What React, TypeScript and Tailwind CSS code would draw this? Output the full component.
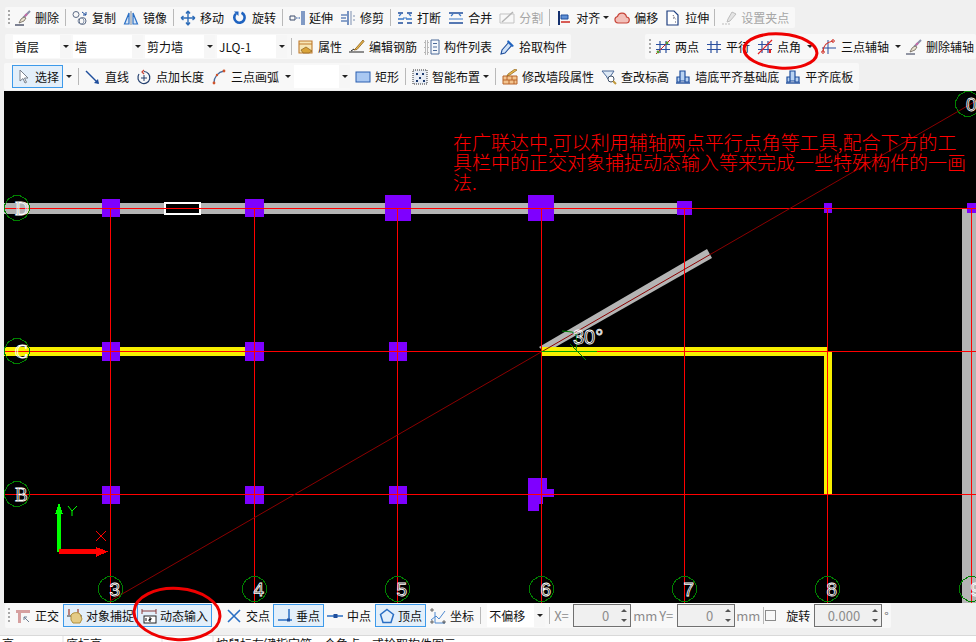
import type { ReactNode } from "react";
import clsx from "clsx";

const navy = "#1f4e9c";
const blue = "#2a6fc4";

function Svg({ children }: { children: ReactNode }) {
  return (
    <svg viewBox="0 0 16 16" className="h-4 w-4 shrink-0" fill="none">
      {children}
    </svg>
  );
}

const axisGrid = (
  <>
    <path d="M5 2v12M11 2v12M1 5.5h14M1 10.5h14" stroke="#2b4f9e" strokeWidth="1.2" />
  </>
);

const dualBars = (
  <>
    <path d="M1 3h5M10 3h5M1 13h5M10 13h5" stroke={navy} strokeWidth="1.3" />
    <path d="M2 6l2-2M14 6l-2-2M6 8h4" stroke="#3a78c8" strokeWidth="1.2" />
    <path d="M1 9h6M9 9h6" stroke="#3a78c8" strokeWidth="1.4" />
  </>
);

const buildingIcon = (
  <>
    <path d="M5 2h5v10H5zM2 8h3v5H2zM10 8h4v5h-4z" fill="#b9d3f2" stroke={navy} strokeWidth="1.2" />
    <path d="M1 14h14" stroke={navy} strokeWidth="1.4" />
  </>
);

const brush = (
  <>
    <path d="M15 1L8 8" stroke="#8a8fa8" strokeWidth="2" />
    <path d="M9 7l-3 2-2 4 5-2 2-3z" fill="#e9e2d0" stroke="#6b6257" strokeWidth=".8" />
    <path d="M12 4l-2 2" stroke="#c96aa8" strokeWidth="2" />
    <path d="M0 15h9" stroke="#2c3550" strokeWidth="1.2" />
  </>
);

const icons: Record<string, ReactNode> = {
  brush,
  copy: (
    <>
      <circle cx="4" cy="4.5" r="3" stroke="#5c6b85" />
      <circle cx="10.5" cy="11" r="3.5" stroke="#5c6b85" />
      <circle cx="9" cy="11" r="3" stroke="#8a97ad" />
      <path d="M10 2l4 3M14 2v3h-3" stroke={navy} />
    </>
  ),
  mirror: (
    <>
      <path d="M6 3L1.5 14H6zM10 3l4.5 11H10z" stroke={blue} strokeWidth="1.2" fill="#d8e6f7" />
      <path d="M8 1v14" stroke="#7d8797" />
    </>
  ),
  move: (
    <path
      d="M8 1v14M1 8h14M8 1L6 3.5M8 1l2 2.5M8 15l-2-2.5M8 15l2-2.5M1 8l2.5-2M1 8l2.5 2M15 8l-2.5-2M15 8l-2.5 2"
      stroke="#2d6cb8"
      strokeWidth="1.4"
    />
  ),
  rotate: (
    <>
      <path d="M4 3.6a5.2 5.2 0 1 0 5.5-.9" stroke="#1f63c0" strokeWidth="2.6" />
      <path d="M2 1.5h4.5V6z" fill="#1f63c0" />
    </>
  ),
  extend: (
    <>
      <path d="M1 6h5v4H1z" stroke="#3a4a6a" />
      <path d="M7 8h4" stroke={navy} strokeDasharray="1.5 1" />
      <path d="M13 1v14M15 1v14" stroke={navy} strokeWidth="1.1" />
    </>
  ),
  trim: (
    <>
      <path d="M1 5h6M1 11h6M1 8h5" stroke={navy} />
      <path d="M8 1v14" stroke={navy} strokeWidth="1.2" />
      <path d="M11 1v14" stroke="#7d8fb0" />
      <path d="M13 6h2M13 10h2" stroke="#7d8fb0" />
    </>
  ),
  dualBars,
  merge: (
    <>
      <path d="M1 3h14M1 13h14" stroke={navy} strokeWidth="1.3" />
      <path d="M3 6l2-2M13 6l-2-2M1 9h14" stroke="#3a78c8" strokeWidth="1.2" />
    </>
  ),
  split: (
    <>
      <path d="M1 4h14M1 13h14M1 4v9M15 4v9" stroke="#c3c3c3" />
      <path d="M3 12L14 2" stroke="#b5b5b5" strokeWidth="1.4" />
    </>
  ),
  align: (
    <>
      <path d="M3 1v14" stroke="#14306e" strokeWidth="2" />
      <path d="M5 5h7v4H5z" fill="#5f90d6" stroke={navy} />
      <path d="M5 12h9" stroke="#d0342c" strokeWidth="1.6" />
    </>
  ),
  offset: (
    <path
      d="M4 13a3.3 3.3 0 0 1-.5-6.5 4.6 4.6 0 0 1 9 .5 3 3 0 0 1-.5 6z"
      fill="#f2c0ba"
      stroke="#c7463a"
      strokeWidth="1.2"
    />
  ),
  stretch: (
    <>
      <path d="M2 1h7l4 4v10H2z" stroke="#1e3f80" strokeWidth="1.2" fill="#fff" />
      <path d="M8 5l3 5M10 12h2M8 8h1" stroke="#556" strokeDasharray="1 1" />
    </>
  ),
  grip: (
    <>
      <path d="M11 2L7 9l-1 3 3-1 6-7z" fill="#e4e4e4" stroke="#bdbdbd" />
      <path d="M1 14h9" stroke="#bdbdbd" strokeDasharray="2 1" />
    </>
  ),
  props: (
    <>
      <path d="M1 2h13v12H1z" fill="#f7e6b5" stroke="#bf7a2e" strokeWidth="1.1" />
      <path d="M1 5h13" stroke="#bf7a2e" />
      <path d="M3 11l5-3 6 4-3 2H5z" fill="#d9a43a" stroke="#8b5f1d" strokeWidth=".7" />
    </>
  ),
  rebar: (
    <>
      <path d="M14 1L7 9l-2 2 3-.5 7-8z" fill="#e8b74b" stroke="#8b5f1d" strokeWidth=".8" />
      <path d="M0 13h15" stroke="#222" />
      <path d="M2 12l3-2" stroke="#222" />
    </>
  ),
  list: (
    <>
      <path d="M7 1h8v14H7z" fill="#f4f7fb" stroke="#4c6a99" />
      <path d="M9 4.5h4M9 8h4M9 11.5h4" stroke="#4c6a99" />
      <path d="M1 2h3v3H1zM1 7h3v3H1zM1 12h3v3H1z" stroke="#7a7a7a" strokeDasharray="1 1" />
    </>
  ),
  pick: (
    <>
      <path d="M10 3L3 11l-1 4 4-1 7-8z" fill="#cfe2f8" stroke={navy} strokeWidth="1.1" />
      <path d="M9 1l6 6-2 1-5-5z" fill="#1f63c0" />
    </>
  ),
  twoPoint: (
    <>
      {axisGrid}
      <path d="M1 15L15 1" stroke="#c92a2a" />
      <circle cx="3" cy="13" r="1.4" fill="#5a9b2a" />
      <circle cx="12" cy="4" r="1.4" fill="#5a9b2a" />
    </>
  ),
  parallel: axisGrid,
  angle: (
    <>
      {axisGrid}
      <path d="M1 15L15 1" stroke="#e02020" strokeWidth="1.2" />
      <path d="M13 10v4" stroke="#e02020" strokeWidth="2" />
    </>
  ),
  arcAxis: (
    <>
      <path d="M7 1v14M1 9h14" stroke="#2b4f9e" />
      <path d="M2 13C2 7 6 3 12 2" stroke="#d0342c" strokeWidth="1.2" />
      <circle cx="2" cy="13" r="1.3" stroke="#d0342c" />
      <circle cx="12" cy="2" r="1.3" stroke="#d0342c" />
    </>
  ),
  pointer: <path d="M4 1v11l3-2.5 2 4.5 1.5-.7-2-4.300h3.500z" fill="#fff" stroke="#78808c" />,
  line: (
    <>
      <path d="M1 2l12 12" stroke={navy} strokeWidth="1.4" />
      <path d="M14 15l-1-5-4 4z" fill={navy} />
    </>
  ),
  addLength: (
    <>
      <path d="M3 5a6 6 0 1 0 5-2.500" stroke="#24406f" strokeWidth="1.2" />
      <path d="M8 6v6M5 9h6" stroke="#24406f" />
      <path d="M8 1l-2 2 2 2" stroke="#c7463a" strokeWidth="1.2" />
    </>
  ),
  arc: (
    <>
      <path d="M3 14C3 8 7 3 13 2" stroke="#4a6a9a" strokeWidth="1.3" />
      <circle cx="3" cy="14" r="1.4" fill="#d0542c" />
      <circle cx="6" cy="6" r="1.2" fill="#d0542c" />
      <circle cx="13" cy="2" r="1.4" fill="#d0542c" />
    </>
  ),
  rect: <rect x="1" y="3" width="14" height="10" fill="#a9c8f2" stroke="#2a5fb0" />,
  smart: (
    <>
      <rect x="1" y="1" width="14" height="14" fill="#e8edf5" stroke="#333" strokeDasharray="1 1" />
      <path d="M4 4h2v2H4zM10 4h2v2h-2zM7 8h2v2H7zM4 11h2v2H4zM11 11h2v2h-2z" fill="#1d3b70" />
    </>
  ),
  wallAttr: (
    <>
      <path d="M1 7h14v8H1z" fill="#f3c48f" stroke="#b8652a" />
      <path d="M1 11h14M5 7v4M10 7v4M7 11v4M12 11v4" stroke="#b8652a" />
      <path d="M13 0L6 5l-1 2 3-1 7-5z" fill="#e8b74b" stroke="#8b5f1d" strokeWidth=".7" />
    </>
  ),
  level: (
    <>
      <path d="M1 2h12l-4 6v3L6 9V8z" fill="#dce8f5" stroke="#4c6a99" />
      <circle cx="10" cy="10" r="3" fill="#fff" stroke="#3f4f66" />
      <path d="M12 12l3 3" stroke="#c29a3c" strokeWidth="2" />
    </>
  ),
  building: buildingIcon,
  ortho: (
    <>
      <path d="M1 2h14v3H6v10H3V5H1z" fill="#d6a0a0" />
      <path d="M9 9l5 5M9 9v3M9 9h3" stroke="#6f7f94" />
    </>
  ),
  snap: (
    <>
      <path d="M2 1v6M11 1v6" stroke="#a23a2a" strokeWidth="1.2" />
      <path d="M0 8h15" stroke="#333" />
      <path d="M4 7c2-3 7-3 9-1l2 5-2 4H6l-2-3z" fill="#e5cb86" stroke="#b08f3c" />
    </>
  ),
  dynamic: (
    <>
      <path d="M1 3h14M1 1v5M15 1v5" stroke="#8a3a3a" />
      <rect x="3" y="8" width="12" height="7" fill="#fff" stroke="#222" />
      <path d="M5 10v3M8 10h2v1.500H8V13h2" stroke="#111" />
    </>
  ),
  cross: <path d="M2 2l12 12M14 2L2 14" stroke={blue} strokeWidth="1.6" />,
  perp: (
    <>
      <path d="M1 12h14M12 1v11" stroke={blue} strokeWidth="1.5" />
      <rect x="10" y="10.500" width="3" height="3" fill={navy} />
    </>
  ),
  mid: (
    <>
      <path d="M0 8h16" stroke={blue} strokeWidth="1.5" />
      <rect x="6.500" y="6" width="4" height="4" fill={navy} />
    </>
  ),
  vertex: <path d="M8 1.500l6.500 5-2.500 8H4l-2.500-8z" stroke={blue} strokeWidth="1.5" />,
  coord: (
    <>
      <path d="M5 15V4M5 15h10" stroke="#4c88d0" />
      <path d="M1 12l5-4 3 3 6-8" stroke="#4c88d0" />
      <path d="M1 1h2v2H1zM1 13h2v2H1zM13 13h2v2h-2z" stroke="#333" strokeWidth=".7" />
    </>
  ),
};

function Caret({ wide }: { wide?: boolean }) {
  return (
    <span
      className={clsx(
        "h-0 w-0 shrink-0 border-x-[3px] border-t-[3px] border-x-transparent border-t-[#222]",
        wide ? "ml-[2px]" : "ml-[-1px]",
      )}
    />
  );
}

function Sep({ className }: { className?: string }) {
  return <span className={clsx("mx-[-1px] h-[17px] w-px shrink-0 bg-[#b9b9b9]", className)} />;
}

function Grip({ className }: { className?: string }) {
  return (
    <span
      className={clsx(
        "h-[15px] w-[2px] shrink-0 bg-[repeating-linear-gradient(#a8a8a8_0_2px,transparent_2px_4px)]",
        className,
      )}
    />
  );
}

type ToolProps = {
  icon: string;
  label: string;
  caret?: boolean;
  wide?: boolean;
  disabled?: boolean;
  className?: string;
};

function Tool({ icon, label, caret, wide, disabled, className }: ToolProps) {
  return (
    <div className={clsx("flex shrink-0 items-center gap-1", disabled && "text-[#a6a6a6]", className)}>
      <Svg>{icons[icon]}</Svg>
      <span className="whitespace-nowrap">{label}</span>
      {caret && <Caret wide={wide} />}
    </div>
  );
}

function Active({ icon, label, className }: { icon: string; label: string; className?: string }) {
  return (
    <div
      className={clsx(
        "flex h-[23px] shrink-0 items-center gap-[3px] border border-[#3d9aea] bg-[#e3effa] px-[3px]",
        className,
      )}
    >
      <Svg>{icons[icon]}</Svg>
      <span className="whitespace-nowrap">{label}</span>
    </div>
  );
}

function Combo({ label, className }: { label?: string; className?: string }) {
  return (
    <div className={clsx("flex h-[23px] shrink-0 items-center bg-white", className)}>
      <span className="flex-1 whitespace-nowrap pl-[2px]">{label}</span>
      <span className="flex h-full w-[11px] items-center justify-center bg-[#f6f6f6]">
        <span className="h-0 w-0 border-x-[3px] border-t-[3px] border-x-transparent border-t-[#222]" />
      </span>
    </div>
  );
}

function Spin({ value, className }: { value: string; className?: string }) {
  return (
    <div
      className={clsx(
        "flex h-[23px] shrink-0 items-center justify-end border border-[#707070] bg-[#f0f0f0] text-[13px] text-[#8c8c8c]",
        className,
      )}
    >
      <span>{value}</span>
      <span className="ml-[8px] flex w-[13px] flex-col items-center gap-[7px]">
        <span className="h-0 w-0 border-x-[3px] border-b-[3px] border-x-transparent border-b-[#555]" />
        <span className="h-0 w-0 border-x-[3px] border-t-[3px] border-x-transparent border-t-[#555]" />
      </span>
    </div>
  );
}

const columns = [
  { x: 110.5, label: "3" },
  { x: 254.5, label: "4" },
  { x: 397.5, label: "5" },
  { x: 541.5, label: "6" },
  { x: 684.5, label: "7" },
  { x: 827.5, label: "8" },
  { x: 971.5, label: "9" },
];

const rows = [
  { y: 208.5, label: "D" },
  { y: 351.5, label: "C" },
  { y: 494.5, label: "B" },
];

// [x, y, w, h] of the column footprints
const posts = [
  [102, 199, 18, 18],
  [245, 199, 19, 18],
  [385, 195, 26, 26],
  [528, 195, 26, 26],
  [677, 201, 15, 14],
  [824, 203, 8, 10],
  [967, 203, 9, 10],
  [102, 342, 18, 19],
  [245, 342, 19, 19],
  [389, 342, 18, 19],
  [102, 486, 18, 18],
  [245, 486, 19, 18],
  [389, 486, 18, 18],
];

function Bubble({ cx, cy }: { cx: number; cy: number }) {
  const points = Array.from({ length: 12 }, (_, i) => {
    const a = (i * Math.PI) / 6 + Math.PI / 12;
    return `${(cx + 12.5 * Math.cos(a)).toFixed(1)},${(cy + 12.5 * Math.sin(a)).toFixed(1)}`;
  }).join(" ");
  return <polygon points={points} fill="none" stroke="#008000" />;
}

function Drawing() {
  return (
    <svg viewBox="4 91 972 512" className="block h-[512px] w-[972px] bg-black" shapeRendering="crispEdges">
      <rect x="4" y="203" width="674" height="11" fill="#b4b4b4" />
      <rect x="962" y="208" width="14" height="395" fill="#b4b4b4" />
      <polygon points="539,347 707,249 712,258 545,353" fill="#b4b4b4" shapeRendering="auto" />
      <rect x="4" y="347" width="248" height="9" fill="#f7ef00" />
      <rect x="541" y="347" width="287" height="9" fill="#f7ef00" />
      <rect x="824" y="352" width="8" height="142" fill="#f7ef00" />

      {posts.map(([x, y, w, h]) => (
        <rect key={`${x}-${y}`} x={x} y={y} width={w} height={h} fill="#7f00ff" />
      ))}
      <polygon
        points="528,478 547,478 547,489 554,489 554,497 543,497 543,504 539,504 539,511 528,511"
        fill="#7f00ff"
      />

      <rect x="165" y="203" width="35" height="11" fill="#000" stroke="#fff" strokeWidth="2" />

      {rows.map((r) => (
        <line key={r.label} x1="4" x2="976" y1={r.y} y2={r.y} stroke="#ff0000" />
      ))}
      {columns.map((c) => (
        <line key={c.label} x1={c.x} x2={c.x} y1="208" y2="603" stroke="#ff0000" />
      ))}

      <line x1="110" y1="601" x2="976" y2="101" stroke="#8a0000" shapeRendering="auto" />

      <line x1="541" x2="597" y1="351.500" y2="351.500" stroke="#00a000" />
      <path d="M562 331l10 1 4 2 1 9-1 7M570 344l16 16" stroke="#008000" fill="none" shapeRendering="auto" />

      {rows.map((r) => (
        <g key={r.label}>
          <Bubble cx={17} cy={r.y - 0.5} />
          <text x="15" y={r.y + 6.5} fill="none" stroke="#fff" strokeWidth=".8" fontSize="19" fontFamily="Liberation Serif, serif">
            {r.label}
          </text>
        </g>
      ))}
      {columns.map((c) => (
        <g key={c.label}>
          <Bubble cx={c.x} cy={589} />
          <text x={c.x - 1} y="596" fill="none" stroke="#fff" strokeWidth=".8" fontSize="19" fontFamily="Liberation Sans, sans-serif">
            {c.label}
          </text>
        </g>
      ))}
      <Bubble cx={968} cy={104} />
      <text x="966" y="111" fill="none" stroke="#fff" strokeWidth=".8" fontSize="19" fontFamily="Liberation Sans, sans-serif">
        0
      </text>
      <text x="573" y="344" fill="none" stroke="#fff" strokeWidth=".8" fontSize="20" fontFamily="Liberation Sans, sans-serif">
        30°
      </text>

      <rect x="57" y="510" width="4" height="42" fill="#00ff00" />
      <polygon points="59,503 63,514 55,514" fill="#00ff00" />
      <path d="M68 506l4 5 5-5M72 511v5" stroke="#00ff00" fill="none" shapeRendering="auto" />
      <rect x="59" y="549" width="40" height="5" fill="#ff0000" />
      <polygon points="108,551.500 96,547 96,557" fill="#ff0000" />
      <path d="M96 531l10 10M106 531l-10 10" stroke="#ff0000" fill="none" shapeRendering="auto" />
    </svg>
  );
}

export default function App() {
  return (
    <div className="relative flex h-[642px] w-[976px] flex-col overflow-hidden bg-[#f0f0f0] text-[12px] leading-none text-[#111] [font-family:'Noto_Sans_CJK_SC','Liberation_Sans',sans-serif]">
      {/* top toolbars */}
      <div className="ml-[5px] mt-[7px] flex h-[21px] w-[790px] shrink-0 items-center gap-[7px] rounded-[2px] bg-[#f8f8f8] pl-[3px]">
        <Grip className="mr-[-2px]" />
        <Tool icon="brush" label="删除" />
        <Sep />
        <Tool icon="copy" label="复制" />
        <Tool icon="mirror" label="镜像" />
        <Sep />
        <Tool icon="move" label="移动" />
        <Tool icon="rotate" label="旋转" className="ml-[1px]" />
        <Sep />
        <Tool icon="extend" label="延伸" />
        <Tool icon="trim" label="修剪" />
        <Sep />
        <Tool icon="dualBars" label="打断" />
        <Tool icon="merge" label="合并" />
        <Tool icon="split" label="分割" disabled />
        <Sep />
        <Tool icon="align" label="对齐" caret className="mr-[-2px]" />
        <Tool icon="offset" label="偏移" />
        <Tool icon="stretch" label="拉伸" className="mr-[-1px]" />
        <Sep />
        <Tool icon="grip" label="设置夹点" disabled />
      </div>

      <div className="mt-[6px] flex h-[25px] shrink-0 items-center justify-between">
        <div className="ml-[5px] flex h-full items-center gap-[7px] rounded-[2px] bg-[#f8f8f8] pl-[8px] pr-[4px]">
          <div className="mr-[-2px] flex gap-[2px]">
            <Combo label="首层" className="w-[58px]" />
            <Combo label="墙" className="w-[70px]" />
            <Combo label="剪力墙" className="w-[70px]" />
            <Combo label="JLQ-1" className="w-[70px]" />
          </div>
          <Sep />
          <Tool icon="props" label="属性" />
          <Tool icon="rebar" label="编辑钢筋" />
          <Tool icon="list" label="构件列表" />
          <Tool icon="pick" label="拾取构件" />
        </div>
        <div className="flex h-full w-[331px] items-center gap-[7px] overflow-hidden rounded-[2px] bg-[#f8f8f8] pl-[4px]">
          <Grip className="mr-[-3px]" />
          <Tool icon="twoPoint" label="两点" />
          <Tool icon="parallel" label="平行" />
          <Tool icon="angle" label="点角" caret wide className="mr-[1px]" />
          <Tool icon="arcAxis" label="三点辅轴" caret wide />
          <Tool icon="brush" label="删除辅轴" className="ml-[-2px]" />
        </div>
      </div>

      <div className="ml-[4px] mt-[4px] flex h-[27px] w-[855px] shrink-0 items-center gap-[7px] rounded-[2px] bg-[#f8f8f8] pl-[8px]">
        <Active icon="pointer" label="选择" className="mr-[-3px]" />
        <Caret />
        <Sep />
        <Tool icon="line" label="直线" />
        <Tool icon="addLength" label="点加长度" />
        <Tool icon="arc" label="三点画弧" caret wide />
        <Combo className="ml-[-4px] mr-[-2px] w-[56px]" />
        <Tool icon="rect" label="矩形" />
        <Sep />
        <Tool icon="smart" label="智能布置" caret />
        <Sep />
        <Tool icon="wallAttr" label="修改墙段属性" />
        <Tool icon="level" label="查改标高" className="mr-[-1px]" />
        <Tool icon="building" label="墙底平齐基础底" className="mr-[-1px]" />
        <Tool icon="building" label="平齐底板" />
      </div>

      {/* drawing area */}
      <div className="ml-[4px] mt-[1px] h-[512px] w-[972px] shrink-0">
        <Drawing />
      </div>

      {/* snap toolbar */}
      <div className="ml-[5px] flex h-[25px] w-[886px] shrink-0 items-center gap-[7px] rounded-[2px] bg-[#f8f8f8] pl-[3px]">
        <Grip className="mr-[-2px]" />
        <Tool icon="ortho" label="正交" className="mr-[-3px]" />
        <Active icon="snap" label="对象捕捉" className="mr-[-8px]" />
        <Active icon="dynamic" label="动态输入" className="mr-[7px]" />
        <Tool icon="cross" label="交点" className="mr-[-4px]" />
        <Active icon="perp" label="垂点" className="mr-[-4px]" />
        <Tool icon="mid" label="中点" className="mr-[-3px]" />
        <Active icon="vertex" label="顶点" className="mr-[-3px]" />
        <Tool icon="coord" label="坐标" />
        <Sep />
        <Combo label="不偏移" className="mr-[-2px] w-[58px]" />
        <Sep className="mr-[-7px]" />
        <span className="ml-[4px] w-[17px] text-[13px] text-[#8c8c8c]">X=</span>
        <Spin value="0" className="ml-[-5px] w-[58px]" />
        <span className="ml-[-5px] w-[24px] text-[13px] text-[#8c8c8c]">mm</span>
        <span className="ml-[-5px] w-[17px] text-[13px] text-[#8c8c8c]">Y=</span>
        <Spin value="0" className="ml-[-6px] w-[58px]" />
        <span className="ml-[-6px] w-[23px] text-[13px] text-[#8c8c8c]">mm</span>
        <Sep className="ml-[-3px]" />
        <span className="ml-[-5px] h-[11px] w-[11px] shrink-0 border border-[#8c8c8c]" />
        <span className="ml-[3px] text-[12px]">旋转</span>
        <Spin value="0.000" className="ml-[-3px] w-[68px]" />
        <span className="ml-[-5px] text-[12px] text-[#666]">°</span>
      </div>

      {/* status bar, cut off by the window edge */}
      <div className="mt-[7px] flex flex-1 gap-[2px] border-t border-[#d9d9d9]">
        <div className="w-[62px] bg-white pl-[2px] pt-[2px]">高 ▾</div>
        <div className="w-[97px] bg-white pl-[2px] pt-[2px]">底标高 ▾</div>
        <div className="w-[49px] bg-white pl-[2px] pt-[2px]">▾</div>
        <div className="flex-1 bg-white pl-[2px] pt-[2px]">按鼠标左键指定第一个角点，或拾取构件图元</div>
      </div>

      {/* annotation and hand-drawn marks laid over the screen */}
      <div className="absolute left-[453px] top-[132px] w-[522px] text-[19px] leading-[20px] text-[#ff0000] [font-family:'Noto_Sans_CJK_SC',sans-serif] font-light">
        在广联达中,可以利用辅轴两点平行点角等工具,配合下方的工具栏中的正交对象捕捉动态输入等来完成一些特殊构件的一画法.
      </div>
      <svg viewBox="0 0 976 642" className="pointer-events-none absolute left-0 top-0 h-[642px] w-[976px]" fill="none">
        <ellipse cx="780.500" cy="51" rx="36.500" ry="17" stroke="#ee0000" strokeWidth="3" transform="rotate(4 780 51)" />
        <ellipse cx="177" cy="614" rx="43" ry="25.500" stroke="#ee0000" strokeWidth="3" transform="rotate(4 177 614)" />
      </svg>
    </div>
  );
}
